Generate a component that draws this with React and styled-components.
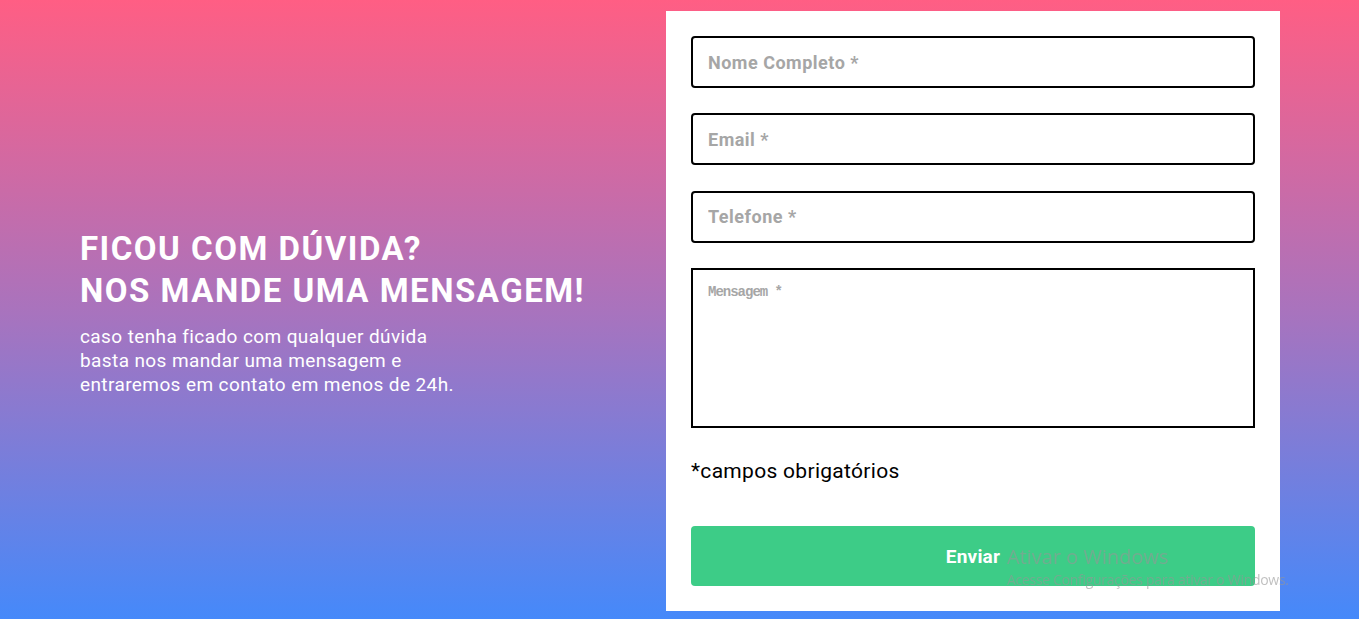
import React from "react";
import styled, { createGlobalStyle } from "styled-components";

const GlobalStyle = createGlobalStyle`
  * {
    box-sizing: border-box;
  }

  body {
    margin: 0;
    font-family: Roboto, "Liberation Sans", sans-serif;
  }
`;

const App = () => {
  return (
    <>
      <GlobalStyle />
      <Section>
        <TextColumn>
          <Title>
            FICOU COM DÚVIDA?
            <br />
            NOS MANDE UMA MENSAGEM!
          </Title>
          <Description>
            caso tenha ficado com qualquer dúvida
            <br />
            basta nos mandar uma mensagem e
            <br />
            entraremos em contato em menos de 24h.
          </Description>
        </TextColumn>

        <FormCard>
          <Field type="text" placeholder="Nome Completo *" />
          <Field type="email" placeholder="Email *" />
          <Field type="tel" placeholder="Telefone *" />
          <MessageArea placeholder="Mensagem *" />
          <RequiredNote>*campos obrigatórios</RequiredNote>
          <SendButton type="button">Enviar</SendButton>
        </FormCard>
      </Section>

      <Watermark>
        <WatermarkTitle>Ativar o Windows</WatermarkTitle>
        <WatermarkText>Acesse Configurações para ativar o Windows.</WatermarkText>
      </Watermark>
    </>
  );
};

const Section = styled.section`
  height: 619px;
  padding: 11px 79px 8px 80px;
  display: grid;
  grid-template-columns: 1fr 614px;
  align-items: center;
  background: linear-gradient(180deg, #ff5e84 0%, #a973bd 50%, #4589fa 100%);
`;

const TextColumn = styled.div`
  display: flex;
  flex-direction: column;
  color: #ffffff;
  padding-top: 2px;
`;

const Title = styled.h1`
  margin: 0 0 13px;
  font-size: 33px;
  line-height: 42px;
  font-weight: 700;
  letter-spacing: 1.5px;
`;

const Description = styled.p`
  margin: 0;
  font-size: 19px;
  line-height: 24px;
  font-weight: 400;
  letter-spacing: 0.4px;
`;

const FormCard = styled.form`
  height: 600px;
  background: #ffffff;
  padding: 25px;
  display: flex;
  flex-direction: column;
`;

const Field = styled.input`
  height: 52px;
  margin-bottom: 25.4px;
  padding: 0 15px;
  border: 2px solid #000000;
  border-radius: 4px;
  font-family: Roboto, "Liberation Sans", sans-serif;
  font-size: 18px;
  font-weight: 700;
  letter-spacing: 0.5px;
  outline: none;

  &::placeholder {
    color: #a6a6a6;
  }
`;

const MessageArea = styled.textarea`
  height: 160px;
  padding: 14px 15px;
  border: 2px solid #000000;
  border-radius: 0;
  resize: none;
  font-family: "Liberation Mono", monospace;
  font-size: 14px;
  font-weight: 700;
  letter-spacing: -1px;
  outline: none;

  &::placeholder {
    color: #a6a6a6;
  }
`;

const RequiredNote = styled.p`
  margin: 31px 0 0;
  font-size: 21px;
  line-height: 24px;
  letter-spacing: 0.3px;
  color: #000000;
`;

const SendButton = styled.button`
  margin-top: auto;
  height: 60px;
  border: none;
  border-radius: 4px;
  background: #3dcc87;
  color: #ffffff;
  font-family: Roboto, "Liberation Sans", sans-serif;
  font-size: 19px;
  font-weight: 700;
  letter-spacing: 0.2px;
  cursor: pointer;
`;

const Watermark = styled.div`
  position: fixed;
  left: 1007px;
  top: 544px;
  color: rgba(150, 150, 150, 0.6);
  font-family: "Open Sans", "Liberation Sans", sans-serif;
  pointer-events: none;
`;

const WatermarkTitle = styled.div`
  font-size: 20px;
  line-height: 26px;
  font-weight: 400;
`;

const WatermarkText = styled.div`
  font-size: 14px;
  line-height: 20px;
  font-weight: 400;
  letter-spacing: -0.3px;
`;

export default App;
